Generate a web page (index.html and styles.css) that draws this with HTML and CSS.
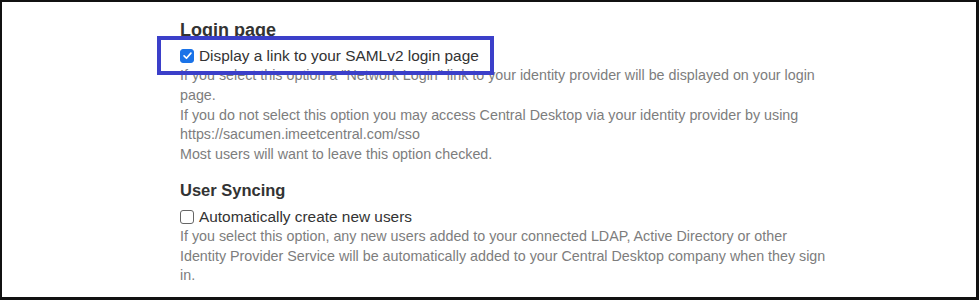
FILE: index.html
```html
<!DOCTYPE html>
<html>
<head>
<meta charset="utf-8">
<link rel="stylesheet" href="styles.css">
</head>
<body>
<div class="frame">
  <div class="content">
    <section class="group group-login">
      <h3 class="title">Login page</h3>
      <label class="option"><span class="box box-on"><svg viewBox="0 0 16 16" width="11" height="11"><path d="M3 8.5 L6.5 12 L13 4.5" fill="none" stroke="#fff" stroke-width="2.4" stroke-linecap="round" stroke-linejoin="round"/></svg></span>Display a link to your SAMLv2 login page</label>
      <p class="desc">If you select this option a "Network Login" link to your identity provider will be displayed on your login page.<br>If you do not select this option you may access Central Desktop via your identity provider by using https://sacumen.imeetcentral.com/sso<br>Most users will want to leave this option checked.</p>
    </section>
    <section class="group group-sync">
      <h3 class="title title-small">User Syncing</h3>
      <label class="option"><span class="box"></span>Automatically create new users</label>
      <p class="desc">If you select this option, any new users added to your connected LDAP, Active Directory or other Identity Provider Service will be automatically added to your Central Desktop company when they sign in.</p>
    </section>
  </div>
  <div class="highlight"></div>
</div>
</body>
</html>
```
FILE: styles.css
```css
html, body { margin: 0; padding: 0; background: #fff; }
.frame {
  position: relative;
  width: 979px;
  height: 300px;
  box-sizing: border-box;
  border: 2px solid #111;
  border-right-width: 3px;
  border-bottom-width: 3px;
  overflow: hidden;
  font-family: "Liberation Sans", Arial, sans-serif;
}
.content { padding: 17px 0 0 178px; width: 652px; }
.group-login { margin-bottom: 14px; }
.title { margin: 0; font-size: 18px; font-weight: bold; color: #333; line-height: 22px; }
.title-small { font-size: 16.5px; }
.option { display: flex; align-items: center; font-size: 15.4px; color: #333; line-height: 20px; margin-top: 4px; }
.group-login .option { line-height: 21px; margin-top: 4px; }
.group-sync .option { margin-top: 6px; }
.box {
  width: 14px; height: 14px; box-sizing: border-box;
  border: 1.5px solid #666; border-radius: 3px; margin-right: 5px;
  display: inline-flex; align-items: center; justify-content: center;
}
.box-on { background: #1a73e8; border-color: #1a73e8; }
.desc { margin: 0; font-size: 14.3px; color: #7d7d7d; line-height: 19.75px; }
.highlight {
  position: absolute; left: 155px; top: 34px; width: 337px; height: 39px;
  box-sizing: border-box; border: 4px solid #3b3fc9;
}
```
